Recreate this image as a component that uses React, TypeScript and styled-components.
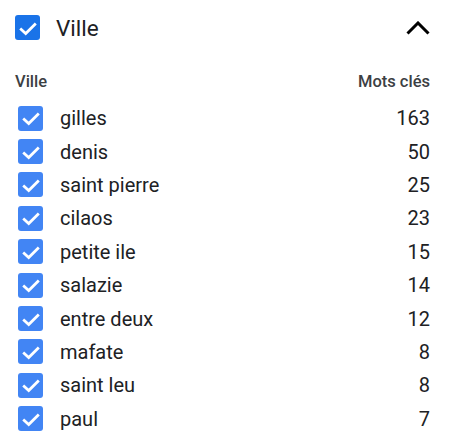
import React from 'react';
import styled, { createGlobalStyle } from 'styled-components';

const GlobalStyle = createGlobalStyle`
body {
  margin: 0;
  background: #ffffff;
  font-family: Roboto, "Noto Sans", Arial, sans-serif;
}
`;

const Panel = styled.div`
width: 453px;
box-sizing: border-box;
padding: 15px 23px 0 15px;
`;

const Header = styled.div`
display: flex;
align-items: center;
height: 25px;
`;

const Title = styled.span`
margin-left: 16px;
font-size: 22.5px;
color: #202124;
flex: 1;
`;

const ColumnHead = styled.div`
display: flex;
justify-content: space-between;
margin-top: 31.5px;
font-size: 16.5px;
font-weight: 500;
line-height: 20px;
color: #3c4043;
`;

const List = styled.div`
margin-top: 10px;
margin-left: 3px;
`;

const Row = styled.div`
display: flex;
align-items: center;
height: 33.4px;
`;

const Name = styled.span`
margin-left: 17px;
flex: 1;
font-size: 20px;
color: #202124;
`;

const Count = styled.span`
font-size: 20px;
color: #202124;
`;

interface BoxProps {
  $dark?: boolean;
}

const Box = styled.span<BoxProps>`
display: inline-flex;
align-items: center;
justify-content: center;
width: 25px;
height: 25px;
border-radius: 3px;
background: ${({ $dark }) => ($dark ? '#1a73e8' : '#4285f4')};
flex-shrink: 0;
`;

const Check = ({ dark }: { dark?: boolean }) => (
  <Box $dark={dark}>
    <svg width="22" height="22" viewBox="0 0 24 24">
      <polyline points="3.5,12.5 9.5,18 20.5,7" fill="none" stroke="#fff" strokeWidth="3" />
    </svg>
  </Box>
);

const Chevron = () => (
  <svg width="24" height="14" viewBox="0 0 24 14">
    <polyline points="1.5,12.5 12,2 22.5,12.5" fill="none" stroke="#000" strokeWidth="3" />
  </svg>
);

const villes = [
  { name: 'gilles', count: 163 },
  { name: 'denis', count: 50 },
  { name: 'saint pierre', count: 25 },
  { name: 'cilaos', count: 23 },
  { name: 'petite ile', count: 15 },
  { name: 'salazie', count: 14 },
  { name: 'entre deux', count: 12 },
  { name: 'mafate', count: 8 },
  { name: 'saint leu', count: 8 },
  { name: 'paul', count: 7 },
];

function App() {
  return (
    <>
      <GlobalStyle />
      <Panel>
        <Header>
          <Check dark />
          <Title>Ville</Title>
          <Chevron />
        </Header>
        <ColumnHead>
          <span>Ville</span>
          <span>Mots clés</span>
        </ColumnHead>
        <List>
          {villes.map((v) => (
            <Row key={v.name}>
              <Check />
              <Name>{v.name}</Name>
              <Count>{v.count}</Count>
            </Row>
          ))}
        </List>
      </Panel>
    </>
  );
}

export default App;
